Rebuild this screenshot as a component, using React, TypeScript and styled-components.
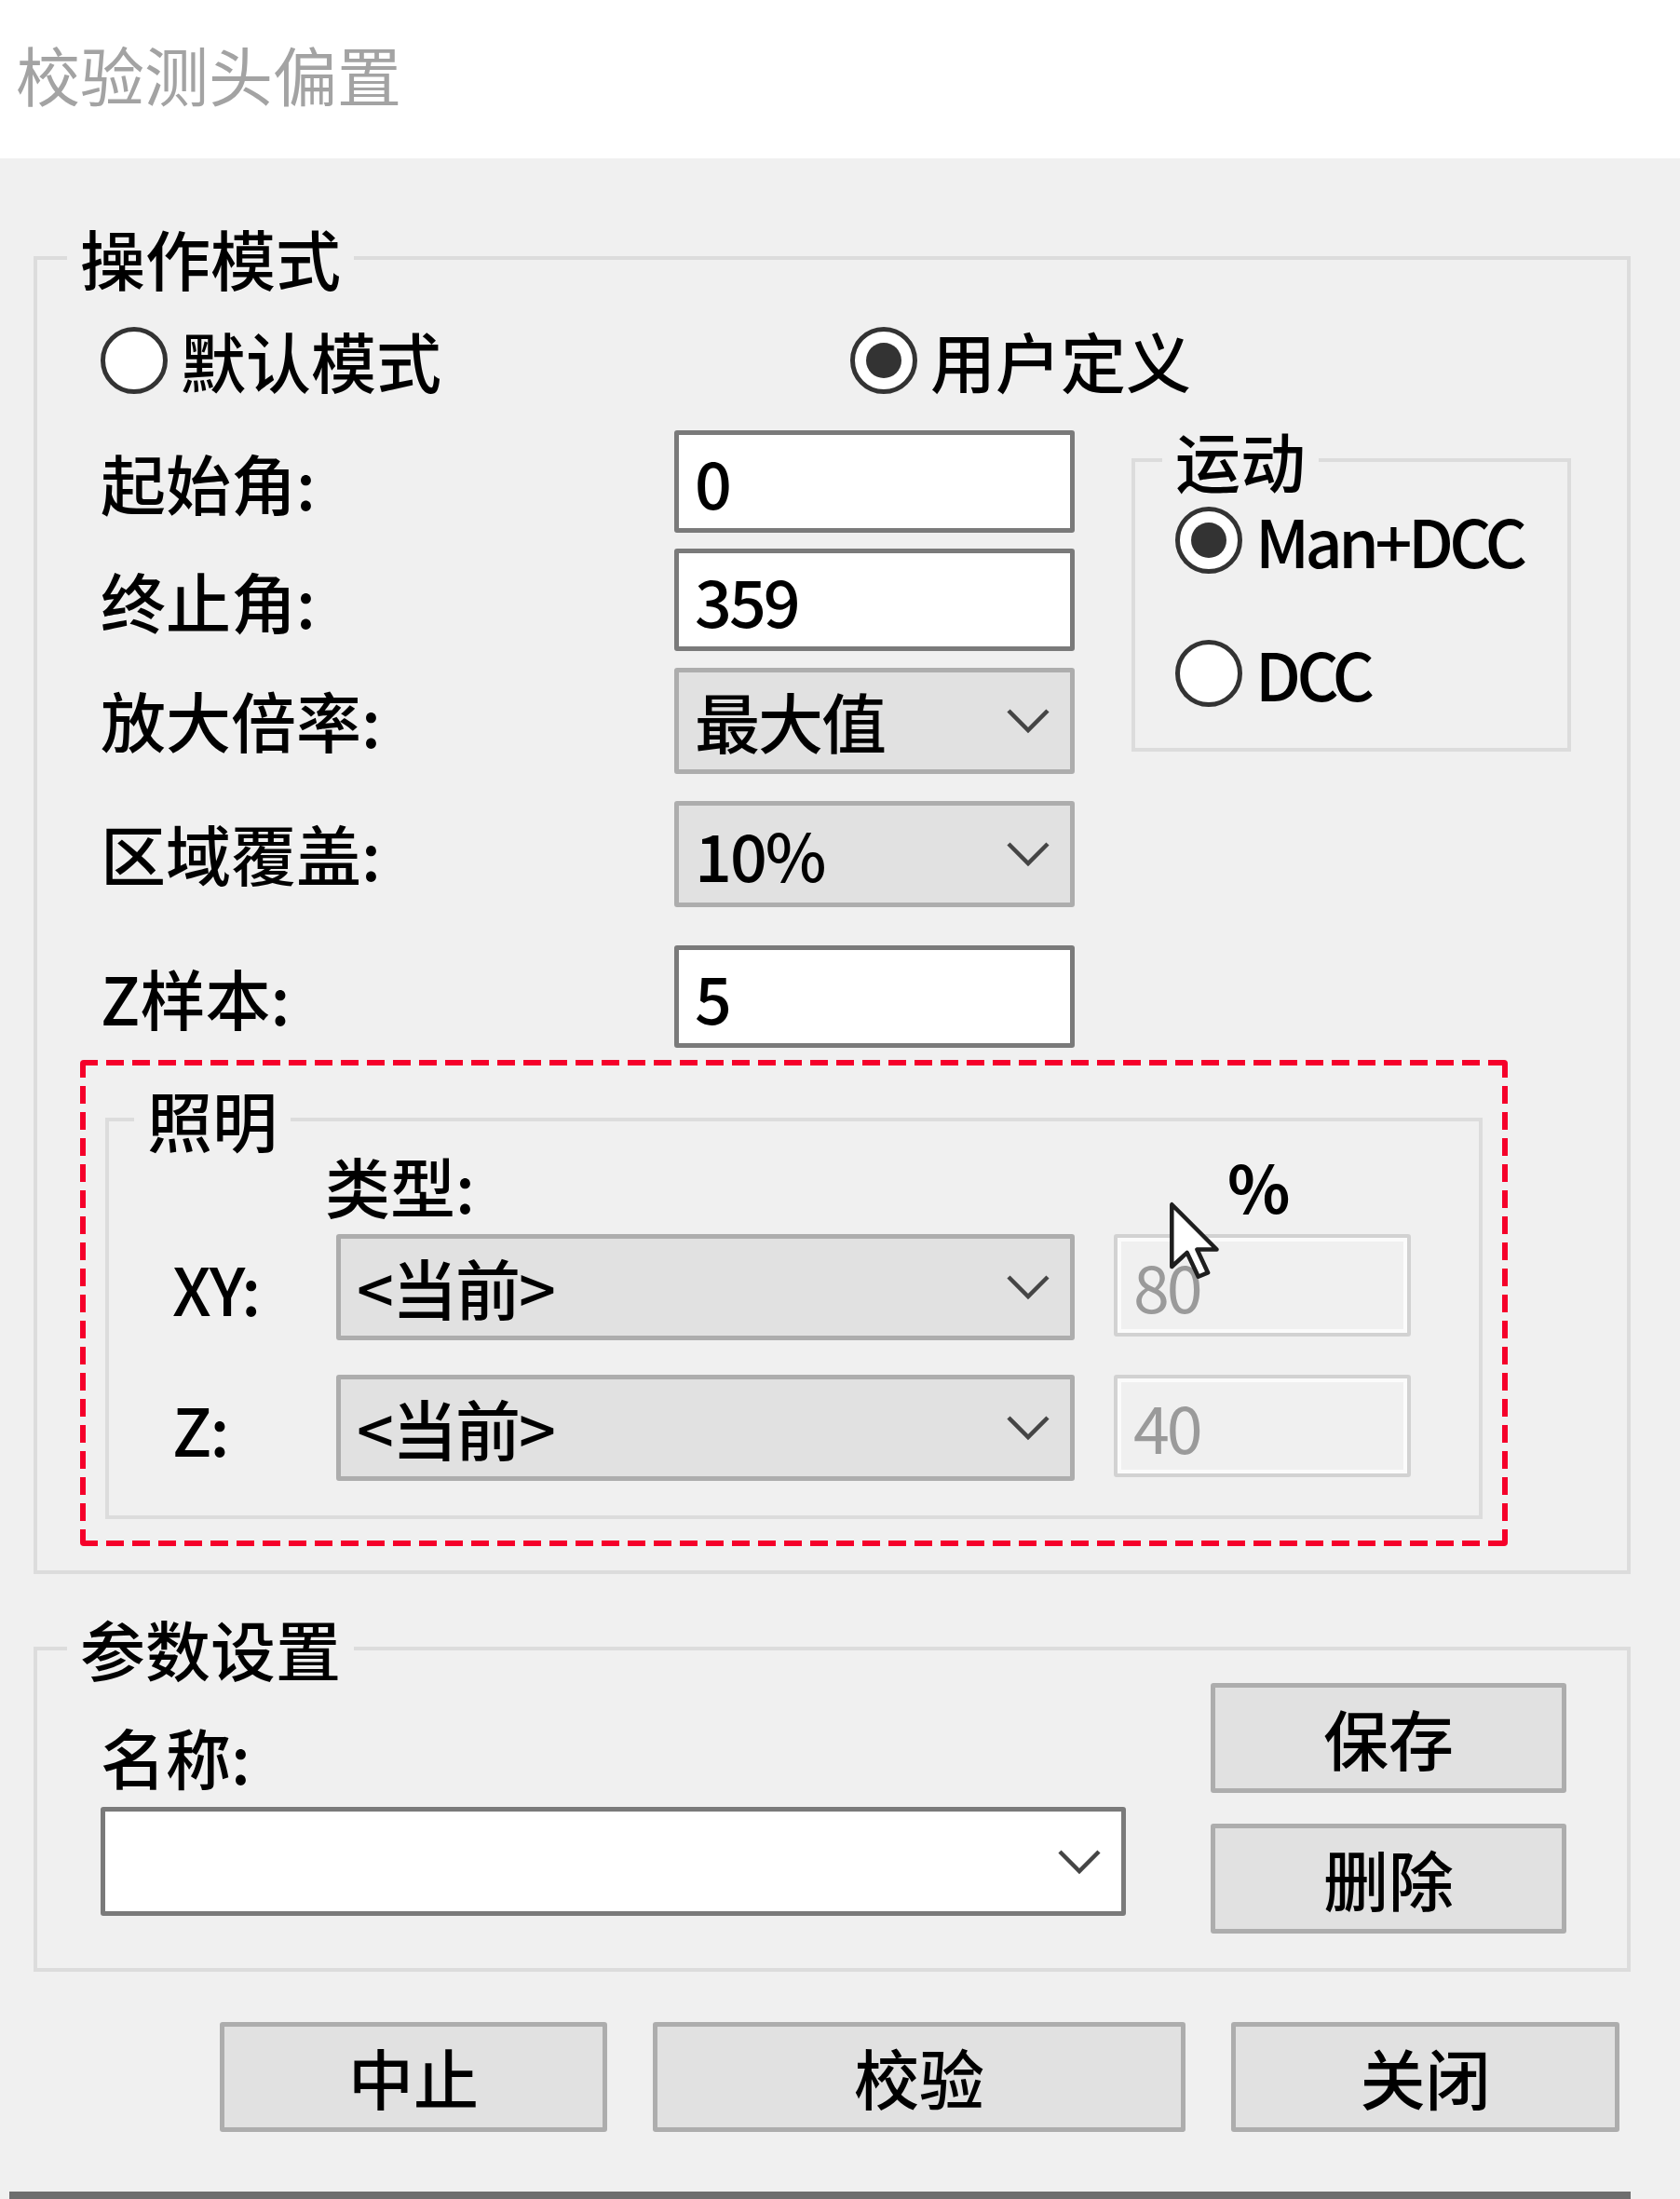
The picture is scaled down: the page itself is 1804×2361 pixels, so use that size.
import React from 'react';
import styled, { createGlobalStyle } from 'styled-components';

const GlobalStyle = createGlobalStyle`
  html, body {
    margin: 0;
    padding: 0;
    background: #f0f0f0;
  }
  body {
    font-family: 'Noto Sans CJK SC', 'Noto Sans', sans-serif;
    font-weight: 500;
    color: #000;
  }
`;

const Chevron = () => (
  <ChevronSvg viewBox="0 0 48 28" width="48" height="28">
    <polyline points="3,3 24,24 45,3" fill="none" stroke="#454545" strokeWidth="4.5" />
  </ChevronSvg>
);

const Radio = ({ label, checked, latin }: { label: string; checked?: boolean; latin?: boolean }) => (
  <RadioOption $latin={!!latin}>
    <RadioCircle $checked={!!checked} />
    <span>{label}</span>
  </RadioOption>
);

const Combo = ({ value, white }: { value: string; white?: boolean }) => (
  <ComboBox $white={!!white}>
    <span>{value}</span>
    <Chevron />
  </ComboBox>
);

const App = () => {
  return (
    <>
      <GlobalStyle />
      <Window>
        <TitleBar>
          <Title>校验测头偏置</Title>
        </TitleBar>
        <Body>
          <GroupBox $mt={72}>
            <Legend $ml={32}>操作模式</Legend>
            <ModeContent>
              <RadioRow>
                <Radio label="默认模式" />
                <Radio label="用户定义" checked />
              </RadioRow>
              <FieldArea>
                <FieldGrid>
                  <FieldLabel>起始角:</FieldLabel>
                  <TextBox>0</TextBox>
                  <FieldLabel>终止角:</FieldLabel>
                  <TextBox>359</TextBox>
                  <FieldLabel>放大倍率:</FieldLabel>
                  <Combo value="最大值" />
                  <FieldLabel>区域覆盖:</FieldLabel>
                  <Combo value="10%" />
                  <FieldLabel>Z样本:</FieldLabel>
                  <TextBox>5</TextBox>
                </FieldGrid>
                <MotionGroup>
                  <Legend $ml={29}>运动</Legend>
                  <MotionContent>
                    <Radio label="Man+DCC" checked latin />
                    <Radio label="DCC" latin />
                  </MotionContent>
                </MotionGroup>
              </FieldArea>
              <DashedFrame>
                <GroupBox $mt={0}>
                  <Legend $ml={27}>照明</Legend>
                  <LightContent>
                    <LightGrid $mt={1} $h={70}>
                      <span />
                      <HeaderText $ml={-12}>类型:</HeaderText>
                      <HeaderText $ml={122} $bold>%</HeaderText>
                    </LightGrid>
                    <LightGrid $mt={17} $h={116}>
                      <RowLabel>XY:</RowLabel>
                      <Combo value="<当前>" />
                      <PercentBox>80</PercentBox>
                    </LightGrid>
                    <LightGrid $mt={35} $h={116}>
                      <RowLabel>Z:</RowLabel>
                      <Combo value="<当前>" />
                      <PercentBox>40</PercentBox>
                    </LightGrid>
                  </LightContent>
                </GroupBox>
              </DashedFrame>
            </ModeContent>
          </GroupBox>

          <GroupBox $mt={45}>
            <Legend $ml={32}>参数设置</Legend>
            <ParamContent>
              <NameColumn>
                <NameLabel>名称:</NameLabel>
                <NameCombo>
                  <Combo value="" white />
                </NameCombo>
              </NameColumn>
              <SideButtons>
                <Button $w={382} $h={118}>保存</Button>
                <Button $w={382} $h={118}>删除</Button>
              </SideButtons>
            </ParamContent>
          </GroupBox>

          <Footer>
            <Button $w={416} $h={118}>中止</Button>
            <Button $w={572} $h={118}>校验</Button>
            <Button $w={417} $h={118}>关闭</Button>
          </Footer>
          <BottomEdge />
        </Body>

        <Cursor viewBox="0 0 13 20" width="56" height="88">
          <path
            d="M1,1 L1,16.5 L4.8,13 L7.6,19 L10,18 L7.3,12.2 L12.2,12.2 Z"
            fill="#fff"
            stroke="#1e1e1e"
            strokeWidth="1.05"
            strokeLinejoin="round"
          />
        </Cursor>
      </Window>
    </>
  );
};

export default App;

const Window = styled.div`
  position: relative;
  width: 1804px;
  height: 2361px;
  overflow: hidden;
  background: #f0f0f0;
  font-size: 70px;
  line-height: 70px;
`;

const TitleBar = styled.div`
  height: 170px;
  box-sizing: border-box;
  padding: 44px 0 0 17px;
  background: #fff;
`;

const Title = styled.div`
  font-size: 69px;
  line-height: 70px;
  font-weight: 400;
  color: #a3a3a3;
`;

const Body = styled.div`
  display: flex;
  flex-direction: column;
  padding: 0 53px 0 36px;
`;

const GroupBox = styled.fieldset<{ $mt: number }>`
  margin: ${({ $mt }) => $mt}px 0 0;
  padding: 0;
  min-width: 0;
  border: 4px solid #dcdcdc;
  box-sizing: border-box;
`;

const Legend = styled.legend<{ $ml: number }>`
  margin-left: ${({ $ml }) => $ml}px;
  padding: 0 14px;
  font-size: 70px;
  line-height: 70px;
  color: #000;
`;

const ModeContent = styled.div`
  padding: 0 0 26px 46px;
`;

const RadioRow = styled.div`
  display: grid;
  grid-template-columns: 805px auto;
  align-items: center;
  height: 72px;
  margin-top: 39px;
  padding-left: 22px;
`;

const RadioOption = styled.div<{ $latin: boolean }>`
  display: flex;
  align-items: center;
  gap: 14px;
  white-space: nowrap;
  letter-spacing: ${({ $latin }) => ($latin ? '-4.5px' : '0')};
`;

const RadioCircle = styled.div<{ $checked: boolean }>`
  width: 72px;
  height: 72px;
  box-sizing: border-box;
  border-radius: 50%;
  border: 5px solid #333;
  background: #fff;
  display: flex;
  align-items: center;
  justify-content: center;
  flex-shrink: 0;

  &::after {
    content: '';
    display: ${({ $checked }) => ($checked ? 'block' : 'none')};
    width: 38px;
    height: 38px;
    border-radius: 50%;
    background: #333;
  }
`;

const FieldArea = styled.div`
  display: flex;
  align-items: flex-start;
  margin-top: 39px;
  padding-left: 22px;
`;

const FieldGrid = styled.div`
  display: grid;
  grid-template-columns: 616px 430px;
  grid-template-rows: 127px 128px 143px 155px 110px;
  align-items: start;
`;

const FieldLabel = styled.div`
  height: 112px;
  display: flex;
  align-items: center;
`;

const TextBox = styled.div`
  height: 110px;
  box-sizing: border-box;
  border: 5px solid #7a7a7a;
  border-radius: 3px;
  background: #fff;
  display: flex;
  align-items: center;
  padding-left: 17px;
  letter-spacing: -3px;
`;

const ComboBox = styled.div<{ $white: boolean }>`
  height: 114px;
  box-sizing: border-box;
  border: 5px solid ${({ $white }) => ($white ? '#7a7a7a' : '#adadad')};
  border-radius: 3px;
  background: ${({ $white }) => ($white ? '#fff' : '#e1e1e1')};
  display: flex;
  align-items: center;
  justify-content: space-between;
  padding: 0 21px 0 17px;
  white-space: nowrap;
  letter-spacing: -2px;
`;

const ChevronSvg = styled.svg`
  flex-shrink: 0;
  display: block;
`;

const MotionGroup = styled.fieldset`
  margin: -3px 0 0 61px;
  padding: 0;
  width: 472px;
  height: 348px;
  box-sizing: border-box;
  border: 4px solid #dcdcdc;
`;

const MotionContent = styled.div`
  display: flex;
  flex-direction: column;
  gap: 71px;
  padding: 15px 0 0 43px;
`;

const DashedFrame = styled.div`
  margin-top: 13px;
  width: 1533px;
  box-sizing: border-box;
  padding: 29px 27px;
  border-radius: 4px;
  background:
    repeating-linear-gradient(90deg, #f5002a 0 19px, transparent 19px 28px) left top / 100% 6px no-repeat,
    repeating-linear-gradient(90deg, #f5002a 0 19px, transparent 19px 28px) left bottom / 100% 6px no-repeat,
    repeating-linear-gradient(180deg, #f5002a 0 19px, transparent 19px 28px) left top / 6px 100% no-repeat,
    repeating-linear-gradient(180deg, #f5002a 0 19px, transparent 19px 28px) right top / 6px 100% no-repeat;
`;

const LightContent = styled.div`
  padding: 0 0 35px 68px;
`;

const LightGrid = styled.div<{ $mt: number; $h: number }>`
  display: grid;
  grid-template-columns: 134px 793px 319px;
  column-gap: 42px;
  align-items: start;
  margin-top: ${({ $mt }) => $mt}px;
  height: ${({ $h }) => $h}px;
`;

const HeaderText = styled.div<{ $ml: number; $bold?: boolean }>`
  margin-left: ${({ $ml }) => $ml}px;
  height: 70px;
  white-space: nowrap;
  font-weight: ${({ $bold }) => ($bold ? 700 : 500)};
`;

const RowLabel = styled.div`
  height: 116px;
  display: flex;
  align-items: center;
  letter-spacing: -2px;
`;

const PercentBox = styled.div`
  height: 110px;
  box-sizing: border-box;
  border: 4px solid #d2d2d2;
  border-radius: 3px;
  box-shadow: inset 0 0 0 4px #fbfbfb;
  background: #f0f0f0;
  color: #9a9a9a;
  font-weight: 400;
  display: flex;
  align-items: center;
  padding-left: 17px;
  letter-spacing: -3px;
`;

const ParamContent = styled.div`
  display: flex;
  align-items: flex-start;
  padding: 0 0 37px 68px;
`;

const NameColumn = styled.div`
  width: 1101px;
  display: flex;
  flex-direction: column;
`;

const NameLabel = styled.div`
  margin-top: 46px;
  height: 70px;
`;

const NameCombo = styled.div`
  margin-top: 19px;

  & > div {
    height: 117px;
  }
`;

const SideButtons = styled.div`
  display: flex;
  flex-direction: column;
  gap: 33px;
  margin: 2px 0 0 91px;
`;

const Button = styled.div<{ $w: number; $h: number }>`
  width: ${({ $w }) => $w}px;
  height: ${({ $h }) => $h}px;
  box-sizing: border-box;
  border: 5px solid #adadad;
  border-radius: 3px;
  background: #e1e1e1;
  display: flex;
  align-items: center;
  justify-content: center;
`;

const Footer = styled.div`
  display: flex;
  gap: 49px;
  margin-top: 54px;
  padding-left: 200px;
`;

const BottomEdge = styled.div`
  margin: 64px 0 0 -26px;
  height: 12px;
  background: #6e6e6e;
`;

const Cursor = styled.svg`
  position: absolute;
  left: 1254px;
  top: 1288px;
`;
